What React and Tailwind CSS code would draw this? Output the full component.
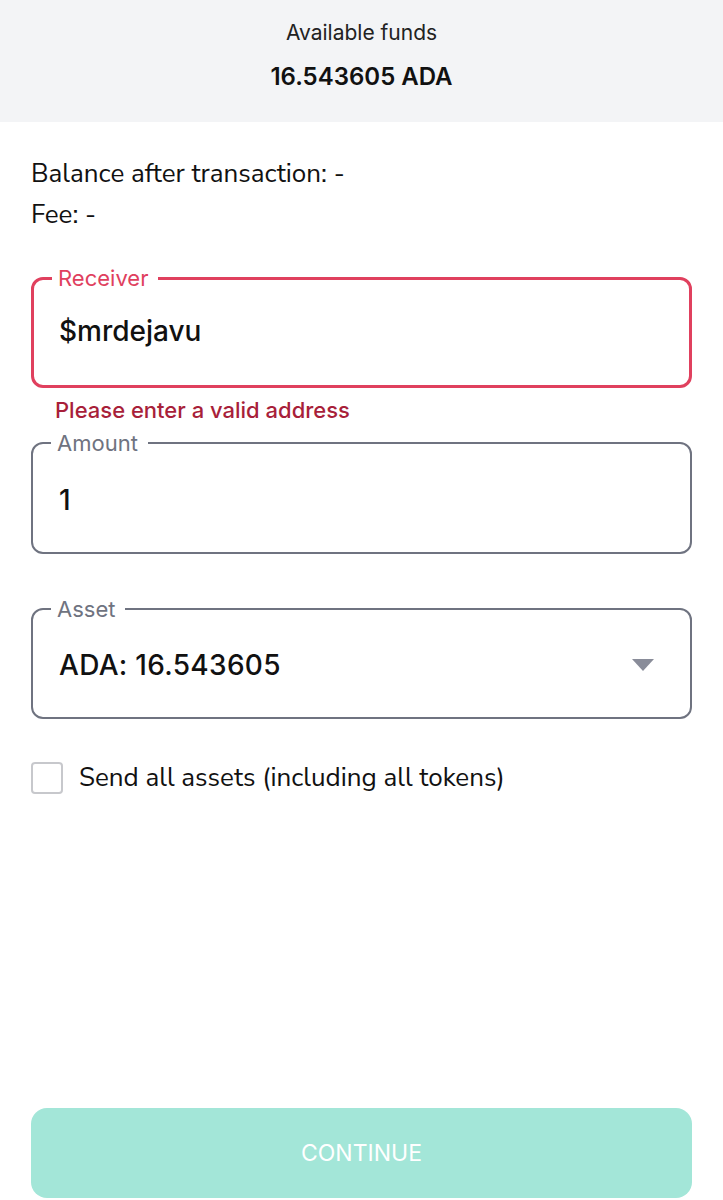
import React from "react";

function Field({ label, error, children, className = "" }) {
  const border = error ? "border-[3px] border-[#e0405e]" : "border-2 border-[#6f7380]";
  const labelColor = error ? "text-[#e0405e]" : "text-[#6f7380]";
  return (
    <fieldset className={`${border} rounded-[12px] mx-0 ${className}`}>
      <legend className={`ml-[18px] pl-[6px] pr-[10px] text-[22px] leading-[24px] ${labelColor}`}>{label}</legend>
      {children}
    </fieldset>
  );
}

const nunito = { fontFamily: "'Nunito Sans', 'Open Sans', sans-serif" };

export default function App() {
  return (
    <div className="w-[723px] h-[1200px] bg-white flex flex-col text-[#111]" style={{ fontFamily: "Inter, 'Noto Sans', sans-serif" }}>
      <div className="bg-[#f3f4f6] h-[122px] flex flex-col items-center pt-[20px]">
        <div className="text-[21px] leading-[26px] text-[#222]">Available funds</div>
        <div className="text-[24px] leading-[30px] font-semibold mt-[16px]">16.543605 ADA</div>
      </div>
      <div className="flex-1 flex flex-col px-[31px]">
        <div className="mt-[37px] text-[26px] leading-[30px]" style={nunito}>
          Balance after transaction: -
        </div>
        <div className="mt-[11px] text-[26px] leading-[30px]" style={nunito}>
          Fee: -
        </div>
        <Field label="Receiver" error className="mt-[36px]">
          <div className="pl-[25px] pt-[25px] pb-[38px] text-[28px] leading-[32px] font-medium">$mrdejavu</div>
        </Field>
        <div className="mt-[9px] ml-[24px] text-[22px] leading-[26px] text-[#a81f3a] font-medium">Please enter a valid address</div>
        <Field label="Amount" className="mt-[8px]">
          <div className="pl-[26px] pt-[29px] pb-[36px] text-[28px] leading-[32px] font-medium">1</div>
        </Field>
        <Field label="Asset" className="mt-[43px]">
          <div className="pl-[26px] pr-[36px] pt-[28px] pb-[36px] flex items-center justify-between">
            <span className="text-[28px] leading-[32px] font-medium tracking-[0.3px]">ADA: 16.543605</span>
            <svg width="22" height="12" viewBox="0 0 22 12"><path d="M0 0 L22 0 L11 12 Z" fill="#898c99" /></svg>
          </div>
        </Field>
        <label className="mt-[43px] flex items-center gap-[16px]">
          <span className="w-[32px] h-[32px] rounded-[4px] border-2 border-[#c7c8cc] bg-white" />
          <span className="text-[26px] leading-[30px]" style={nunito}>
            Send all assets (including all tokens)
          </span>
        </label>
        <div className="flex-1" />
        <button className="mb-[2px] h-[90px] w-full rounded-[16px] bg-[#a3e6d8] text-white text-[23px]">
          CONTINUE
        </button>
      </div>
    </div>
  );
}
